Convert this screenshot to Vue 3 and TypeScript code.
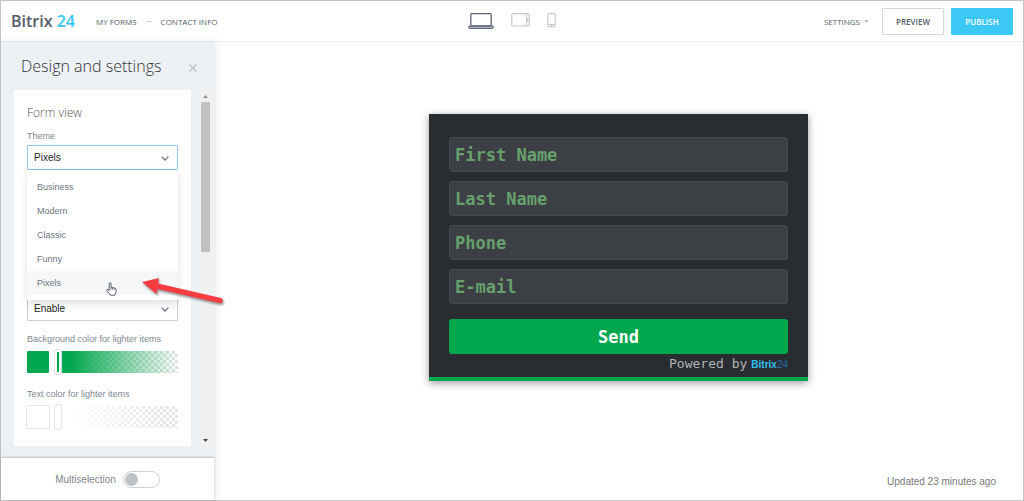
<script setup lang="ts">
import { ref } from 'vue'

const themes: string[] = ['Business', 'Modern', 'Classic', 'Funny', 'Pixels']
const theme = ref('Pixels')
const state = ref('Enable')
const device = ref('laptop')
const multiselection = ref(false)
const fillAlpha = ref(0)
const textAlpha = ref(0)

interface Field {
  id: string
  label: string
  type: string
}

const fields: Field[] = [
  { id: 'first-name', label: 'First Name', type: 'text' },
  { id: 'last-name', label: 'Last Name', type: 'text' },
  { id: 'phone', label: 'Phone', type: 'tel' },
  { id: 'email', label: 'E-mail', type: 'email' },
]
</script>

<template>
  <div class="app">
    <header class="topbar">
      <div class="brand-nav">
        <a class="logo" href="#">Bitrix <span>24</span></a>
        <nav class="crumbs">
          <a href="#">MY FORMS</a>
          <i class="dash"></i>
          <a href="#">CONTACT INFO</a>
        </nav>
      </div>
      <div class="devices">
        <button type="button" aria-label="Laptop" :class="{ active: device === 'laptop' }" @click="device = 'laptop'">
          <svg width="26" height="18" viewBox="0 0 26 18" fill="none" stroke="currentColor">
            <rect x="2.8" y="1.6" width="20.4" height="12.4" rx="1" stroke-width="1.3" />
            <path d="M0.6 14.2H25.4V15.4Q25.4 16.4 24.2 16.4H1.8Q0.6 16.4 0.6 15.4Z" stroke-width="1" fill="#b4bbc5" />
          </svg>
        </button>
        <button type="button" aria-label="Tablet" :class="{ active: device === 'tablet' }" @click="device = 'tablet'">
          <svg width="19" height="18" viewBox="0 0 19 18" fill="none" stroke="currentColor">
            <rect x="0.8" y="1.6" width="17.4" height="12.4" rx="1" stroke-width="1.2" />
            <path d="M15.5 1.6V14" />
            <path d="M16.6 6.3V9.5" stroke-width="1.8" />
          </svg>
        </button>
        <button type="button" aria-label="Phone" :class="{ active: device === 'phone' }" @click="device = 'phone'">
          <svg width="9" height="18" viewBox="0 0 9 18" fill="none" stroke="currentColor">
            <rect x="0.8" y="1.6" width="7.4" height="13" rx="1" stroke-width="1.1" />
            <path d="M0.8 12.5H8.2" />
            <path d="M3.5 13.6H5.5" />
          </svg>
        </button>
      </div>
      <div class="actions">
        <button type="button" class="settings">
          SETTINGS
          <svg width="5" height="3" viewBox="0 0 5 3"><path d="M0.3 0.3H4.7L2.5 2.7Z" fill="#a9b0b8" /></svg>
        </button>
        <button type="button" class="btn preview">PREVIEW</button>
        <button type="button" class="btn publish">PUBLISH</button>
      </div>
    </header>

    <div class="body">
      <aside class="sidebar">
        <div class="side-head">
          <h1>Design and settings</h1>
          <button type="button" aria-label="Close">
            <svg width="8" height="8" viewBox="0 0 8 8"><path d="M0.5 0.5L7.5 7.5M7.5 0.5L0.5 7.5" stroke="#bdc2c7" stroke-width="1.3" /></svg>
          </button>
        </div>

        <div class="side-scroll">
          <section class="panel">
            <h2>Form view</h2>
            <label for="theme">Theme</label>
            <div class="select-wrap open">
              <select id="theme" v-model="theme">
                <option v-for="t in themes" :key="t">{{ t }}</option>
              </select>
              <svg class="chevron" width="8" height="5" viewBox="0 0 8 5"><path d="M0.6 0.6L4 4L7.4 0.6" fill="none" stroke="#6d7884" stroke-width="1.3" /></svg>
              <div class="menu" role="listbox" aria-label="Theme">
                <button
                  v-for="t in themes"
                  :key="t"
                  type="button"
                  role="option"
                  :aria-selected="t === theme"
                  :class="{ current: t === theme }"
                  @click="theme = t"
                >{{ t }}</button>
                <svg class="hand" width="11" height="14" viewBox="0 0 11 14">
                  <path d="M3.2 8.4V1.8Q3.3 0.7 4.1 0.7Q5 0.7 5 1.8V5.4Q5.9 4.7 6.6 5.7Q7.5 5.1 8.2 6.1Q9.9 5.7 10 7.4V9.6Q9.9 11.4 8.7 13.2H4.3Q3.6 11.7 1.6 9.8Q0.3 8.3 0.8 7.7Q1.6 7 3.2 8.4Z" fill="#fff" stroke="#444b54" stroke-width="0.9" stroke-linejoin="round" />
                  <path d="M5 5.4V7.6M6.6 5.7V7.8M8.2 6.1V7.9" stroke="#444b54" stroke-width="0.7" />
                </svg>
                <svg class="pointer" width="90" height="32" viewBox="0 0 90 32">
                  <path d="M3 7L20 3L19 8.5L82 23Q85 24.5 83.5 27Q82.5 28.5 80 28L18.5 14L17.5 19Z" fill="#f73d42" />
                </svg>
              </div>
            </div>
            <div class="select-wrap second">
              <select v-model="state" aria-label="State">
                <option>Enable</option>
                <option>Disable</option>
              </select>
              <svg class="chevron" width="8" height="5" viewBox="0 0 8 5"><path d="M0.6 0.6L4 4L7.4 0.6" fill="none" stroke="#6d7884" stroke-width="1.3" /></svg>
            </div>

            <label for="fill-alpha">Background color for lighter items</label>
            <div class="color-row">
              <button type="button" class="swatch green" aria-label="Background color"></button>
              <input id="fill-alpha" v-model="fillAlpha" type="range" class="alpha green" />
            </div>

            <label for="text-alpha">Text color for lighter items</label>
            <div class="color-row">
              <button type="button" class="swatch white" aria-label="Text color"></button>
              <input id="text-alpha" v-model="textAlpha" type="range" class="alpha white" />
            </div>
          </section>

          <div class="scrollbar" aria-hidden="true">
            <svg width="5" height="3" viewBox="0 0 5 3"><path d="M0 3H5L2.5 0Z" fill="#8b8f93" /></svg>
            <div class="rail"><div class="thumb"></div></div>
            <svg width="5" height="3" viewBox="0 0 5 3"><path d="M0 0H5L2.5 3Z" fill="#444" /></svg>
          </div>
        </div>

        <div class="side-foot">
          <label for="multi">Multiselection</label>
          <input id="multi" v-model="multiselection" type="checkbox" class="toggle" />
        </div>
      </aside>

      <main class="stage">
        <form class="form" @submit.prevent>
          <input
            v-for="f in fields"
            :key="f.id"
            :type="f.type"
            :placeholder="f.label"
            :aria-label="f.label"
          />
          <button type="submit">Send</button>
          <p class="powered"><span>Powered by</span><a href="#">Bitrix<span>24</span></a></p>
        </form>
        <p class="updated">Updated 23 minutes ago</p>
      </main>
    </div>
  </div>
</template>

<style>
body {
  margin: 0;
}
</style>

<style scoped>
* {
  box-sizing: border-box;
}

.app {
  display: flex;
  flex-direction: column;
  height: 100vh;
  border: 1px solid #c4c4c4;
  background: #fff;
  font-family: "Liberation Sans", Arial, sans-serif;
  font-size: 10px;
  color: #7d8791;
}

button {
  padding: 0;
  border: 0;
  background: none;
  font: inherit;
  color: inherit;
  cursor: pointer;
}

a {
  color: inherit;
  text-decoration: none;
}

svg {
  display: block;
}

.topbar {
  display: grid;
  grid-template-columns: 1fr auto 1fr;
  align-items: center;
  height: 41px;
  flex: none;
  padding: 0 10px;
  border-bottom: 1px solid #eceff1;
  font-family: "Open Sans", sans-serif;
  color: #535c69;
}

.brand-nav {
  display: flex;
  align-items: center;
}

.logo {
  margin-right: 21px;
  font-size: 16px;
  font-weight: 600;
  white-space: nowrap;
}

.logo span {
  color: #2fc6f6;
}

.crumbs {
  display: flex;
  align-items: center;
  gap: 9px;
  font-size: 8px;
  white-space: nowrap;
}

.dash {
  width: 6px;
  height: 1px;
  background: #cfd4d9;
}

.devices {
  display: flex;
  gap: 17px;
  color: #c3c8ce;
}

.devices .active {
  color: #596373;
}

.actions {
  display: flex;
  justify-content: flex-end;
  align-items: center;
  font-size: 8px;
}

.settings {
  display: flex;
  align-items: center;
  gap: 4px;
  margin-right: 13px;
}

.btn {
  width: 62px;
  height: 27px;
  border-radius: 1px;
  font-weight: 600;
}

.preview {
  margin-right: 7px;
  border: 1px solid #d3d9dd;
}

.publish {
  background: #3bc8f5;
  color: #fff;
}

.body {
  display: flex;
  flex: 1;
  min-height: 0;
}

.sidebar {
  display: flex;
  flex-direction: column;
  width: 213px;
  flex: none;
  background: #edf1f4;
  box-shadow: 2px 0 8px rgba(0, 0, 0, 0.1);
}

.side-head {
  display: flex;
  justify-content: space-between;
  align-items: center;
  height: 48px;
  flex: none;
  padding: 0 17px 0 20px;
}

h1,
h2,
p {
  margin: 0;
}

h1 {
  font: 300 16px/24px "Open Sans", sans-serif;
  color: #333;
}

.side-head button {
  margin-top: 4px;
}

.side-scroll {
  display: flex;
  flex: 1;
  min-height: 0;
  padding: 0 4px 12px 13px;
}

.panel {
  flex: 1;
  min-width: 0;
  padding: 14px 13px 0;
  background: #fff;
}

h2 {
  margin-bottom: 7px;
  font: 300 12px/18px "Open Sans", sans-serif;
  color: #555;
}

.panel label {
  display: block;
  margin-bottom: 2px;
  line-height: 14px;
  font-size: 9px;
  white-space: nowrap;
}

.select-wrap {
  position: relative;
}

.select-wrap.second {
  margin: 126px 0 11px;
}

select {
  display: block;
  width: 100%;
  height: 25px;
  padding: 0 6px;
  border: 1px solid #c6cdd3;
  border-radius: 1px;
  background: #fff;
  appearance: none;
  font: 10px "Liberation Sans", Arial, sans-serif;
  color: #222;
}

.open select {
  border-color: #8cc4f2;
}

.chevron {
  position: absolute;
  right: 9px;
  top: 11px;
  pointer-events: none;
}

.menu {
  position: absolute;
  z-index: 2;
  top: 100%;
  left: 0;
  right: 0;
  padding: 5px 0;
  background: #fff;
  box-shadow: 0 4px 8px rgba(0, 0, 0, 0.12);
}

.menu button {
  display: block;
  width: 100%;
  height: 24px;
  padding-left: 10px;
  text-align: left;
  font-size: 9px;
  color: #6b7580;
}

.menu .current {
  background: #f5f7f8;
}

.hand {
  position: absolute;
  left: 79px;
  bottom: 4px;
}

.pointer {
  position: absolute;
  left: 112px;
  bottom: -7px;
  filter: drop-shadow(1px 2px 1px rgba(0, 0, 0, 0.4));
}

.color-row {
  display: flex;
  align-items: center;
  gap: 6px;
  height: 24px;
  margin: 4px 0 13px;
}

.swatch {
  width: 22px;
  height: 22px;
  flex: none;
  border-radius: 1px;
}

.swatch.green {
  background: #00a74c;
}

.swatch.white {
  width: 24px;
  height: 24px;
  margin: 0 -1px;
  border: 1px solid #e4e7e9;
}

.alpha {
  flex: 1;
  min-width: 0;
  height: 22px;
  margin: 0;
  appearance: none;
}

.alpha.green {
  background:
    linear-gradient(90deg, #00a74c 12%, rgba(0, 167, 76, 0)),
    repeating-conic-gradient(#e3e3e3 0 25%, #fff 0 50%) 0 0 / 6px 6px;
}

.alpha.white {
  background:
    linear-gradient(90deg, #fff 15%, rgba(255, 255, 255, 0)),
    repeating-conic-gradient(#e3e3e3 0 25%, #fff 0 50%) 0 0 / 6px 6px;
}

.alpha::-webkit-slider-thumb {
  width: 6px;
  height: 24px;
  appearance: none;
  border: 2px solid #fff;
  border-radius: 2px;
  background: #00a74c;
  box-shadow: 0 0 1px 1px #e0e3e5;
}

.alpha.white::-webkit-slider-thumb {
  background: #fff;
}

.scrollbar {
  display: flex;
  flex-direction: column;
  align-items: center;
  gap: 4px;
  width: 9px;
  flex: none;
  margin-left: 10px;
  padding: 5px 0 4px;
  background: #f0f0f0;
}

.rail {
  flex: 1;
  width: 100%;
}

.thumb {
  height: 45%;
  background: #c1c1c1;
}

.side-foot {
  display: flex;
  justify-content: center;
  align-items: center;
  gap: 7px;
  height: 42px;
  flex: none;
  background: #fff;
  box-shadow: 0 -1px 2px rgba(0, 0, 0, 0.2);
}

.toggle {
  position: relative;
  width: 37px;
  height: 17px;
  margin: 0;
  border: 1px solid #c9ced3;
  border-radius: 9px;
  background: #fff;
  appearance: none;
}

.toggle::before {
  content: "";
  position: absolute;
  top: 1px;
  left: 1px;
  width: 13px;
  height: 13px;
  border-radius: 50%;
  background: #bcc3c9;
}

.toggle:checked::before {
  left: 21px;
}

.stage {
  display: flex;
  flex-direction: column;
  align-items: center;
  flex: 1;
  padding: 72px 27px 10px;
}

.form {
  display: flex;
  flex-direction: column;
  gap: 9px;
  width: 379px;
  max-width: 100%;
  padding: 23px 20px 6px;
  border-bottom: 4px solid #05a84f;
  background: #292c31;
  box-shadow: 0 2px 8px rgba(0, 0, 0, 0.4);
  font-family: "DejaVu Sans Mono", monospace;
}

.form input {
  width: 100%;
  height: 35px;
  padding: 0 5px;
  border: 1px solid #474a4f;
  border-radius: 3px;
  background: #3c3f44;
  font: bold 17px "DejaVu Sans Mono", monospace;
  color: #68a06d;
}

.form input::placeholder {
  color: #68a06d;
  opacity: 1;
}

.form button {
  height: 35px;
  margin-top: 6px;
  border-radius: 3px;
  background: #00a74c;
  font-size: 17px;
  font-weight: bold;
  color: #fff;
}

.powered {
  display: flex;
  justify-content: flex-end;
  align-items: baseline;
  gap: 4px;
  margin-top: -6px;
  font-size: 13px;
  line-height: 14px;
  color: #b2b4b6;
}

.powered a {
  font: bold 10px "Liberation Sans", Arial, sans-serif;
  color: #2fc0f2;
}

.powered a span {
  font-weight: normal;
  color: #2269a8;
}

.updated {
  align-self: flex-end;
  margin-top: auto;
  line-height: 16px;
  font-size: 10px;
  color: #777;
}
</style>
